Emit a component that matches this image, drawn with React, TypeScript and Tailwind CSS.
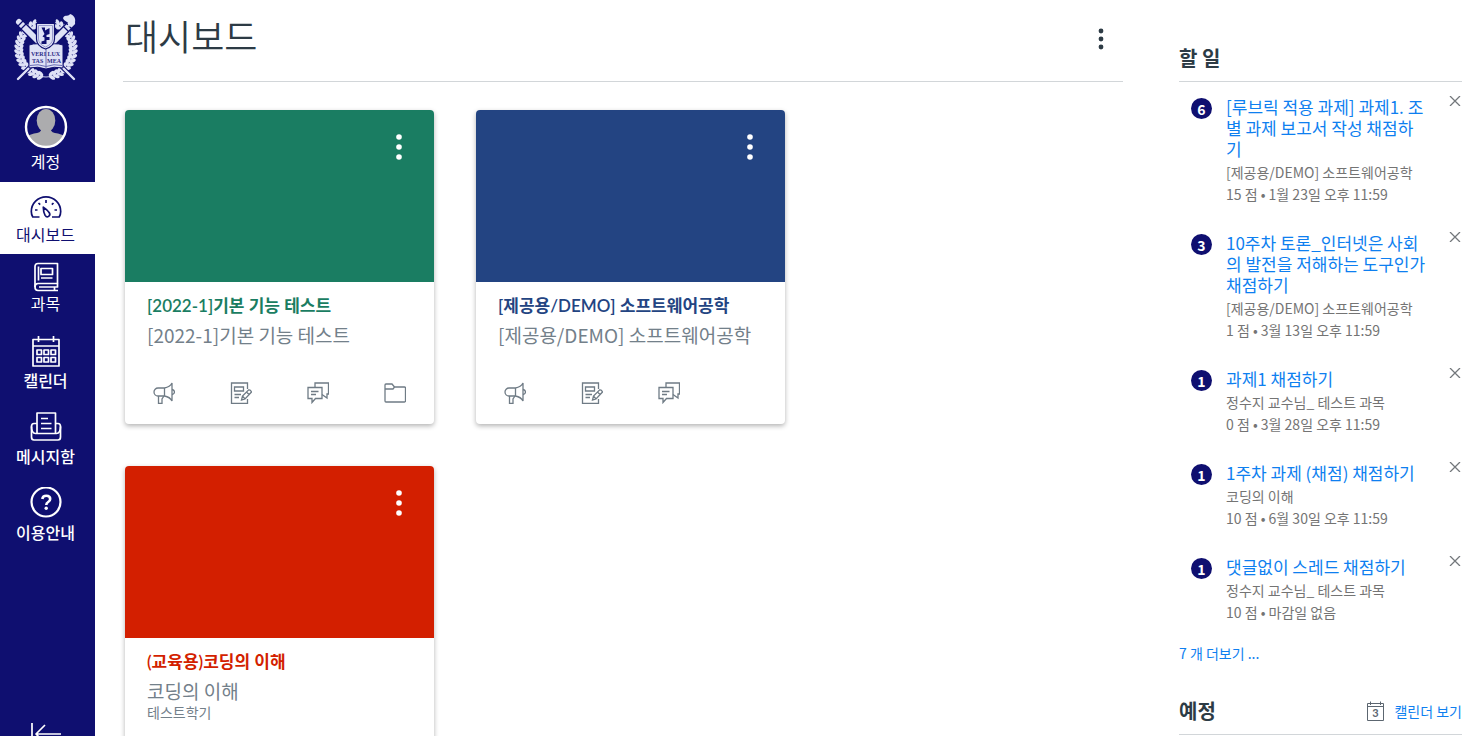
import type { ReactNode } from "react";
import clsx from "clsx";

interface NavItem {
  label: string;
  icon: ReactNode;
  className: string;
}

interface Course {
  title: string;
  name: string;
  term?: string;
  header: string;
  text: string;
  tools: string[];
}

interface Todo {
  count: number;
  title: string;
  course: string;
  detail: string;
}

const LEAF_ANGLES = Array.from({ length: 17 }, (_, i) => 8 + i * 9);

function Emblem() {
  return (
    <svg viewBox="0 0 66 68" className="h-[68px] w-[66px]" aria-hidden="true">
      {[1, -1].map((side) => (
        <g key={side} transform={side === -1 ? "translate(66 0) scale(-1 1)" : undefined}>
          <path d="M33 63A28 28 0 0 1 24 8.500" fill="none" stroke="#c9cdea" strokeWidth="1" />
          {LEAF_ANGLES.map((angle) => (
            <g key={angle} transform={`rotate(${angle} 33 35)`} fill="#dfe2f6">
              <ellipse cx="31" cy="60" rx="3.400" ry="1.700" transform="rotate(38 31 60)" />
              <ellipse cx="31" cy="64" rx="3.400" ry="1.700" transform="rotate(-38 31 64)" />
            </g>
          ))}
        </g>
      ))}
      <g strokeLinecap="round" fill="none">
        <path d="M6 8 30 32M60 8 36 32" stroke="#0f0f70" strokeWidth="8.500" />
        <path d="M6 8 30 32M59 9 36 32" stroke="#dfe2f6" strokeWidth="6" />
        <path d="M48 52 61 65M18 52 5 65" stroke="#0f0f70" strokeWidth="4.500" />
        <path d="M48 52 61 65M18 52 5 65" stroke="#dfe2f6" strokeWidth="2.400" />
      </g>
      <g fill="none" stroke="#0f0f70" strokeWidth="1.200">
        <path d="M5 12l5-5M8 15l5-5M50 12l6 6M53 9l6 6" />
      </g>
      <path d="M50 4c2-4 6-1 7-4 4 1 6 5 5 8-1 4-6 6-9 4 3-1 3-3 1-4-1-1-3-1-4-4z" fill="#dfe2f6" />
      <path
        d="M16 31q9-3 17 1 8-4 17-1v23q-9-2-17 1-8-3-17-1z"
        fill="#dfe2f6"
        stroke="#0f0f70"
        strokeWidth="1"
      />
      <path d="M33 32v22M17 51.500q8-2 16 1 8-3 16-1" fill="none" stroke="#6b6fb4" strokeWidth="1" />
      <g fill="#2b2b86" fontSize="6" fontWeight="700" className="font-['Liberation_Serif',serif]">
        <text x="18" y="42">VERI</text>
        <text x="34.500" y="42">LUX</text>
        <text x="19" y="49">TAS</text>
        <text x="34" y="49">MEA</text>
      </g>
      <path
        d="M23.500 9.500h18V25q0 7-9 10-9-3-9-10z"
        fill="#dfe2f6"
        stroke="#0f0f70"
        strokeWidth="1.200"
      />
      <path d="M25.500 11.500h14V25q0 5-7 8-7-3-7-8z" fill="none" stroke="#8588c4" strokeWidth=".8" />
      <path d="M28.500 13.500h3.500v3l4.500-2.500v6l-3 1v2h3v3h-3v4h-5v-2.500l3-1v-3l-2-1 2-2.500z" fill="#0f0f70" />
    </svg>
  );
}

function Avatar() {
  return (
    <svg viewBox="0 0 44 44" className="size-11" aria-hidden="true">
      <defs>
        <clipPath id="avatar">
          <circle cx="22" cy="22" r="20" />
        </clipPath>
      </defs>
      <g clipPath="url(#avatar)">
        <path d="M0 44V34q3-4 10-5.500 7-.5 7.500-4.500h9q.5 4 7.500 4.500Q41 30 44 34v10z" fill="#acacae" />
        <ellipse cx="22" cy="15.500" rx="9.300" ry="11.500" fill="#acacae" />
      </g>
      <circle cx="22" cy="22" r="20" fill="none" stroke="#fff" strokeWidth="2.400" />
    </svg>
  );
}

function NavIcon({ children }: { children: ReactNode }) {
  return (
    <svg
      viewBox="0 0 32 32"
      className="size-8 shrink-0"
      fill="none"
      stroke="currentColor"
      strokeWidth="1.700"
      strokeLinejoin="round"
      aria-hidden="true"
    >
      {children}
    </svg>
  );
}

const NAV_ITEMS: NavItem[] = [
  {
    label: "대시보드",
    className: "bg-white pt-[10px] pb-[10px] font-normal text-[#0f0f70]",
    icon: (
      <NavIcon>
        <path d="M9.500 25H2.800Q1.300 22.500 1.300 19.500a14.700 14.700 0 0 1 29.400 0q0 3-1.500 5.500H22" />
        <path d="M16 8v3M8.500 11l1.700 1.700M23.500 11l-1.700 1.700M5 18h2.500M24.500 18H27" />
        <path d="M13.300 15.200q4 2.500 6 5.600c1.800 3-2.200 5.600-4.200 2.600q-1.700-3.200-1.800-8.200z" />
      </NavIcon>
    ),
  },
  {
    label: "과목",
    className: "pt-[7px] pb-3 font-normal",
    icon: (
      <NavIcon>
        <path d="M27.500 22.500V2.500H8Q5 2.500 5 5.500v20.500q0 3.500 3 3.500h20" />
        <path d="M5 26q0-3.500 3-3.500h19.500v3.500H9M24.500 26v3.500" />
        <path d="M8.500 5.500v14M11 7.500h11.500v6H11zM11 17h11.500" />
      </NavIcon>
    ),
  },
  {
    label: "캘린더",
    className: "gap-[3px] pt-[10px] pb-[11px] font-medium",
    icon: (
      <NavIcon>
        <path d="M3 4.500h26V31H3zM3 11h26M8.500 1v6M23.500 1v6" />
        <path d="M7 15h4.500v4.500H7zM14 15h4.500v4.500H14zM21 15h4.500v4.500h-4.500zM7 22.500h4.500V27H7zM14 22.500h4.500V27H14zM21 22.500h4.500V27h-4.500z" />
      </NavIcon>
    ),
  },
  {
    label: "메시지함",
    className: "gap-[3px] pt-[10px] pb-[11px] font-medium",
    icon: (
      <NavIcon>
        <path d="M7 22.500V2h18.500v20.500" />
        <path d="M7 12.500H4q-2.500 0-2.500 3V26q0 3 2.500 3h24q2.500 0 2.500-3V15.500q0-3-2.500-3h-2.500" />
        <path d="M1.500 15.500q0 7 4 7h21q4 0 4-7" />
        <path d="M11 7.500h7M11 12.500h10.500M11 17.500h10.500" />
      </NavIcon>
    ),
  },
  {
    label: "이용안내",
    className: "gap-[3px] pt-[10px] pb-[11px] font-medium",
    icon: (
      <NavIcon>
        <circle cx="16" cy="15" r="14.500" strokeWidth="2.200" />
        <path d="M12.300 12q.4-3.200 4-3.200 3.900 0 3.900 3.200 0 1.700-2 3-1.900 1.200-1.900 2.900" strokeWidth="2.600" />
        <circle cx="16.200" cy="21.300" r="1.700" fill="currentColor" stroke="none" />
      </NavIcon>
    ),
  },
];

const COURSES: Course[] = [
  {
    title: "[2022-1]기본 기능 테스트",
    name: "[2022-1]기본 기능 테스트",
    header: "bg-[#1a7d62]",
    text: "text-[#1a7d62]",
    tools: ["공지", "과제", "토론", "파일"],
  },
  {
    title: "[제공용/DEMO] 소프트웨어공학",
    name: "[제공용/DEMO] 소프트웨어공학",
    header: "bg-[#234482]",
    text: "text-[#234482]",
    tools: ["공지", "과제", "토론"],
  },
  {
    title: "(교육용)코딩의 이해",
    name: "코딩의 이해",
    term: "테스트학기",
    header: "bg-[#d31f00]",
    text: "text-[#d31f00]",
    tools: ["공지", "과제", "토론", "파일"],
  },
];

const TODOS: Todo[] = [
  {
    count: 6,
    title: "[루브릭 적용 과제] 과제1. 조별 과제 보고서 작성 채점하기",
    course: "[제공용/DEMO] 소프트웨어공학",
    detail: "15 점 • 1월 23일 오후 11:59",
  },
  {
    count: 3,
    title: "10주차 토론_인터넷은 사회의 발전을 저해하는 도구인가 채점하기",
    course: "[제공용/DEMO] 소프트웨어공학",
    detail: "1 점 • 3월 13일 오후 11:59",
  },
  {
    count: 1,
    title: "과제1 채점하기",
    course: "정수지 교수님_ 테스트 과목",
    detail: "0 점 • 3월 28일 오후 11:59",
  },
  {
    count: 1,
    title: "1주차 과제 (채점) 채점하기",
    course: "코딩의 이해",
    detail: "10 점 • 6월 30일 오후 11:59",
  },
  {
    count: 1,
    title: "댓글없이 스레드 채점하기",
    course: "정수지 교수님_ 테스트 과목",
    detail: "10 점 • 마감일 없음",
  },
];

const TOOL_ICONS: Record<string, ReactNode> = {
  공지: (
    <>
      <path d="M11.500 6H5a4 4 0 0 0 0 8h6.500zM11.500 6q5.500-1 7.500-5v18q-2-4-7.500-5z" />
      <path d="M19 7.500q2.500.5 2.500 2.500T19 12.500M5.500 14v7.500H9V17l2-3" />
    </>
  ),
  과제: (
    <>
      <path d="M17.500 7V1h-16v20.500h16V17" />
      <path d="M4.500 5h9v4h-9zM4.500 12.500H11M4.500 15.500H9" />
      <path d="M11.500 18l1-4 6-6q2-.5 3 2l-6.500 7zM16.500 10l2.500 2.500M12.500 14l2.500 3" />
    </>
  ),
  토론: (
    <>
      <path d="M8 5.500V1h13.500v11H20v4l-5-3.500" />
      <path d="M1 5.500h14v11H8.500L5 20.500v-4H1zM4 9.500h7.500M4 12.500h5" />
    </>
  ),
  파일: <path d="M1 19V3q0-1 1-1h6l2.500 3H20.500q1 0 1 1v13q0 1-1 1H2q-1 0-1-1zM1 7h8l1.500-2" />,
};

function Dots() {
  return (
    <svg viewBox="0 0 24 32" className="h-8 w-6" fill="currentColor" aria-hidden="true">
      <circle cx="12" cy="6" r="2.800" />
      <circle cx="12" cy="16" r="2.800" />
      <circle cx="12" cy="26" r="2.800" />
    </svg>
  );
}

function CourseCard({ course }: { course: Course }) {
  return (
    <article className="flex min-h-[314px] w-[309px] flex-col overflow-hidden rounded bg-white shadow-[0_2px_5px_rgba(0,0,0,0.3)]">
      <div className={clsx("flex h-[172px] items-start justify-end pt-[21px] pr-[23px] text-white", course.header)}>
        <button type="button" aria-label={`${course.name} 설정`}>
          <Dots />
        </button>
      </div>
      <div className="flex-1 px-[22px] pt-3">
        <h2
          className={clsx(
            "mb-1 truncate font-['Lato','Noto_Sans_CJK_KR',sans-serif] text-[17px] leading-6 font-semibold",
            course.text
          )}
        >
          <a href="#course">{course.title}</a>
        </h2>
        <p className="truncate text-[19px] leading-[26px] text-[#73808a]">{course.name}</p>
        {course.term && <p className="text-[14px] leading-4 text-[#73808a]">{course.term}</p>}
      </div>
      <nav className="grid grid-cols-4 justify-items-center pb-5 text-[#6f7b85]">
        {course.tools.map((tool) => (
          <a key={tool} href="#tool" aria-label={tool}>
            <svg
              viewBox="0 0 22 22"
              className="size-[22px]"
              fill="none"
              stroke="currentColor"
              strokeWidth="1.300"
              aria-hidden="true"
            >
              {TOOL_ICONS[tool]}
            </svg>
          </a>
        ))}
      </nav>
    </article>
  );
}

function TodoItem({ todo }: { todo: Todo }) {
  return (
    <li className="flex items-start pb-[27px] pl-3">
      <span className="mt-[2px] mr-[14px] flex size-[21px] shrink-0 items-center justify-center rounded-full bg-[#0f0f70] text-[14px] leading-5 font-bold text-white">
        {todo.count}
      </span>
      <div className="mr-[21px] min-w-0 flex-1">
        <a href="#todo" className="mb-[2px] block text-[17px] leading-[21px] text-[#0e7ff0]">
          {todo.title}
        </a>
        <p className="text-[14px] leading-[22px] text-[#747474]">{todo.course}</p>
        <p className="text-[14px] leading-[22px] text-[#747474]">{todo.detail}</p>
      </div>
      <button type="button" aria-label="무시" className="w-[14px] text-[#73777b]">
        <svg viewBox="0 0 14 10" className="h-[10px] w-[14px]" fill="none" stroke="currentColor" strokeWidth="1.300">
          <path d="M2 0l10 10M12 0L2 10" />
        </svg>
      </button>
    </li>
  );
}

function Sidebar() {
  return (
    <header className="flex w-[95px] shrink-0 flex-col overflow-hidden bg-[#0f0f70] text-[16px] leading-5 text-white">
      <a href="#home" aria-label="홈" className="flex shrink-0 justify-center pt-[14px] pr-1">
        <Emblem />
      </a>
      <nav className="flex shrink-0 flex-col">
        <a href="#account" className="flex flex-col items-center gap-[2px] pt-[23px] pr-1 pb-[11px]">
          <Avatar />
          계정
        </a>
        {NAV_ITEMS.map((item) => (
          <a key={item.label} href="#nav" className={clsx("flex flex-col items-center pr-1", item.className)}>
            {item.icon}
            {item.label}
          </a>
        ))}
      </nav>
      <button type="button" aria-label="메뉴 접기" className="mt-[165px] flex shrink-0 justify-center pr-1">
        <NavIcon>
          <path d="M2 5v22M31 16H6M15 7l-9 9 9 9" />
        </NavIcon>
      </button>
    </header>
  );
}

export default function App() {
  return (
    <div className="flex h-screen overflow-hidden bg-white font-['Noto_Sans_CJK_KR',sans-serif] text-[#2d3b45]">
      <Sidebar />
      <div className="flex min-w-0 flex-1 gap-14 pr-[17px] pl-7">
        <main className="min-w-0 flex-1">
          <div className="flex h-[82px] items-center justify-between border-b border-[#d2d6d9] pr-[10px] pb-1">
            <h1 className="pb-2 pl-[2px] text-[36px] leading-[54px] font-[350]">대시보드</h1>
            <button type="button" aria-label="대시보드 옵션">
              <svg viewBox="0 0 24 32" className="h-8 w-6" fill="currentColor" aria-hidden="true">
                <circle cx="12" cy="8" r="2.400" />
                <circle cx="12" cy="16" r="2.400" />
                <circle cx="12" cy="24" r="2.400" />
              </svg>
            </button>
          </div>
          <div className="flex flex-wrap gap-[42px] pt-7 pr-[200px] pl-[2px]">
            {COURSES.map((course) => (
              <CourseCard key={course.title} course={course} />
            ))}
          </div>
        </main>
        <aside className="w-[283px] shrink-0 pt-[47px]">
          <h2 className="border-b border-[#d2d6d9] pb-3 text-[20px] leading-[22px] font-bold">할 일</h2>
          <ul className="pt-[14px]">
            {TODOS.map((todo) => (
              <TodoItem key={todo.title} todo={todo} />
            ))}
          </ul>
          <a href="#more" className="-mt-[7px] block text-[14px] leading-5 text-[#0e7ff0]">
            7 개 더보기 ...
          </a>
          <div className="mt-[37px] flex items-center justify-between border-b border-[#d2d6d9] pb-3">
            <h2 className="text-[20px] leading-[22px] font-bold">예정</h2>
            <a href="#calendar" className="flex items-center gap-2 text-[14px] leading-5 text-[#0e7ff0]">
              <svg viewBox="0 0 20 20" className="size-5" fill="none" stroke="#5c6670" aria-hidden="true">
                <path d="M1.500 2.500h16v17h-16zM1.500 5.500h16M4.500.500v3.500M14.500.500v3.500" />
                <text
                  x="9.500"
                  y="16"
                  textAnchor="middle"
                  fontSize="11"
                  fontWeight="700"
                  fill="#5c6670"
                  stroke="none"
                  className="font-['Lato',sans-serif]"
                >
                  3
                </text>
              </svg>
              캘린더 보기
            </a>
          </div>
        </aside>
      </div>
    </div>
  );
}
